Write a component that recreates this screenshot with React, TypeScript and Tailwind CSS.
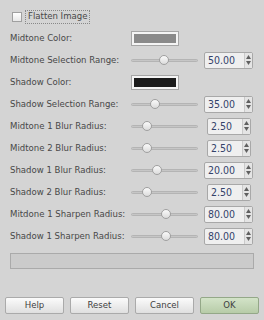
import React from 'react'

const font = { fontFamily: '"DejaVu Sans Condensed", "DejaVu Sans", sans-serif' }

type Row =
  | { kind: 'color'; label: string; swatch: string }
  | { kind: 'slider'; label: string; knob: number; value: string; narrow?: boolean }

const rows: Row[] = [
  { kind: 'color', label: 'Midtone Color:', swatch: 'bg-[#8a8a8a]' },
  { kind: 'slider', label: 'Midtone Selection Range:', knob: 33, value: '50.00' },
  { kind: 'color', label: 'Shadow Color:', swatch: 'bg-[#1b1b1b]' },
  { kind: 'slider', label: 'Shadow Selection Range:', knob: 24, value: '35.00' },
  { kind: 'slider', label: 'Midtone 1 Blur Radius:', knob: 16, value: '2.50', narrow: true },
  { kind: 'slider', label: 'Midtone 2 Blur Radius:', knob: 16, value: '2.50', narrow: true },
  { kind: 'slider', label: 'Shadow 1 Blur Radius:', knob: 26, value: '20.00' },
  { kind: 'slider', label: 'Shadow 2 Blur Radius:', knob: 16, value: '2.50', narrow: true },
  { kind: 'slider', label: 'Mitdone 1 Sharpen Radius:', knob: 35, value: '80.00' },
  { kind: 'slider', label: 'Shadow 1 Sharpen Radius:', knob: 35, value: '80.00' },
]

function Slider({ knob }: { knob: number }) {
  return (
    <div className="relative w-[67px] h-[10px] flex items-center">
      <div className="w-full h-[3px] rounded-full bg-[#c6c6c6] border border-[#b4b4b4]" />
      <div
        className="absolute top-0 w-[10px] h-[10px] rounded-full border border-[#a0a0a0] bg-gradient-to-b from-[#fafafa] to-[#dcdcdc]"
        style={{ left: knob - 5 }}
      />
    </div>
  )
}

function Spin({ value, narrow }: { value: string; narrow?: boolean }) {
  return (
    <div
      className={`flex h-[17px] border border-[#a8a8a8] bg-[#efefef] rounded-[2px] ${
        narrow ? 'w-[44px] ml-[9px]' : 'w-[49px] ml-[6px]'
      }`}
    >
      <div className="flex-1 pl-[3px] text-[10.5px] leading-[15px] text-[#34426a]">{value}</div>
      <div className="w-[8px] flex flex-col items-center justify-center gap-[2px] border-l border-[#cacaca] bg-[#e4e4e4]">
        <svg width="5" height="4" viewBox="0 0 5 4"><path d="M2.5 0L5 4H0z" fill="#606060" /></svg>
        <svg width="5" height="4" viewBox="0 0 5 4"><path d="M0 0H5L2.5 4z" fill="#606060" /></svg>
      </div>
    </div>
  )
}

function Btn({ label, ok }: { label: string; ok?: boolean }) {
  return (
    <div
      className={`w-[59px] h-[17px] flex items-center justify-center rounded-[2px] border text-[9.5px] text-[#404040] ${
        ok
          ? 'border-[#94a888] bg-gradient-to-b from-[#d3e3c8] to-[#b7cca8]'
          : 'border-[#aaaaaa] bg-gradient-to-b from-[#fbfbfb] to-[#dfdfdf]'
      }`}
    >
      {label}
    </div>
  )
}

export default function App() {
  return (
    <div className="w-[264px] h-[320px] bg-[#d4d4d4] flex flex-col text-[9.5px] text-[#484848]" style={font}>
      {/* Flatten checkbox */}
      <div className="h-[21px] mt-[6px] pl-[12px] flex items-center">
        <div className="w-[10px] h-[10px] border border-[#a0a0a0] bg-gradient-to-b from-[#ffffff] to-[#e8e8e8]" />
        <div className="ml-[3px] px-[2px] h-[14px] flex items-center border border-dotted border-[#888]">
          Flatten Image
        </div>
      </div>

      {rows.map((r) => (
        <div key={r.label} className="h-[22px] flex items-center pl-[10px]">
          <div className="w-[121px] whitespace-nowrap">{r.label}</div>
          {r.kind === 'color' ? (
            <div className="w-[48px] h-[15px] border border-[#a6a6a6] bg-[#f4f4f4] p-[2px]">
              <div className={`w-full h-full ${r.swatch}`} />
            </div>
          ) : (
            <>
              <Slider knob={r.knob} />
              <Spin value={r.value} narrow={r.narrow} />
            </>
          )}
        </div>
      ))}

      {/* progress trough */}
      <div className="mx-[10px] mt-[6px] h-[16px] border border-[#aaaaaa] bg-[#cbcbcb]" />

      {/* buttons */}
      <div className="mt-auto mb-[6px] px-[5px] flex gap-[6px]">
        <Btn label="Help" />
        <Btn label="Reset" />
        <Btn label="Cancel" />
        <Btn label="OK" ok />
      </div>
    </div>
  )
}
